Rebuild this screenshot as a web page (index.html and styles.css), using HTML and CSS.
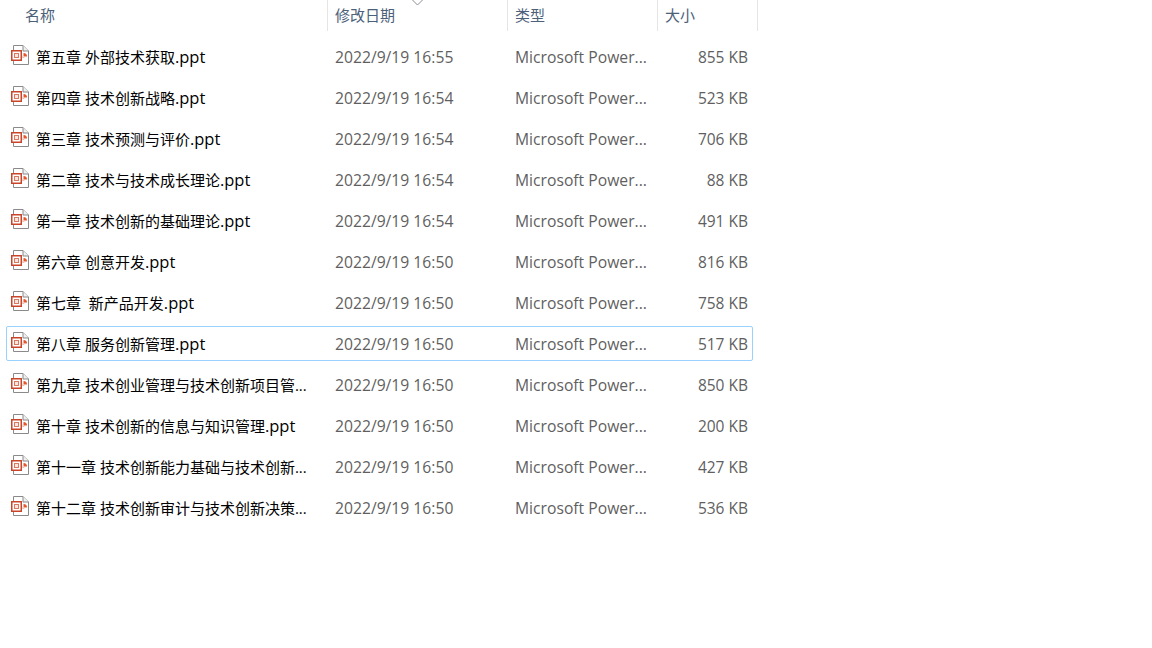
FILE: index.html
```html
<!DOCTYPE html>
<html lang="zh-CN">
<head>
<meta charset="utf-8">
<title>文件列表</title>
<link rel="stylesheet" href="styles.css">
</head>
<body>
<svg class="defs" width="0" height="0" aria-hidden="true">
  <symbol id="ppt" viewBox="0 0 18 20">
    <path d="M2.500 5V.5H12L17.500 6V19.500H2.500V15" fill="#fff" stroke="#8a8a8a"/>
    <path d="M12 .5V6H17.500" fill="#f0f0f0" stroke="#8a8a8a"/>
    <rect x=".75" y="5.750" width="9.500" height="9.500" fill="#fff" stroke="#c8452a" stroke-width="1.500"/>
    <rect x="3.500" y="8.500" width="4" height="4" fill="#fbe6df" stroke="#d9795f"/>
    <path d="M12.500 8V11.500H16A3.500 3.500 0 0 0 12.500 8Z" fill="#e4572e"/>
    <path d="M11.500 9.500V13H15A3.500 3.500 0 0 1 11.500 9.500Z" fill="#f2a38e"/>
  </symbol>
</svg>
<main class="list">
  <header class="head">
    <div class="hcell c-name">名称</div>
    <div class="hcell c-date">修改日期<svg class="sort" width="11" height="6" viewBox="0 0 11 6"><path d="M.5 0L5.500 5L10.500 0" fill="none" stroke="#8a8f96"/></svg></div>
    <div class="hcell c-type">类型</div>
    <div class="hcell c-size">大小</div>
  </header>
  <div class="rows">
    <div class="row"><div class="name"><svg class="icon"><use href="#ppt"/></svg><span class="title">第五章 外部技术获取<span class="ext">.ppt</span></span></div><div class="date">2022/9/19 16:55</div><div class="type">Microsoft Power...</div><div class="size">855 KB</div></div>
    <div class="row"><div class="name"><svg class="icon"><use href="#ppt"/></svg><span class="title">第四章 技术创新战略<span class="ext">.ppt</span></span></div><div class="date">2022/9/19 16:54</div><div class="type">Microsoft Power...</div><div class="size">523 KB</div></div>
    <div class="row"><div class="name"><svg class="icon"><use href="#ppt"/></svg><span class="title">第三章 技术预测与评价<span class="ext">.ppt</span></span></div><div class="date">2022/9/19 16:54</div><div class="type">Microsoft Power...</div><div class="size">706 KB</div></div>
    <div class="row"><div class="name"><svg class="icon"><use href="#ppt"/></svg><span class="title">第二章 技术与技术成长理论<span class="ext">.ppt</span></span></div><div class="date">2022/9/19 16:54</div><div class="type">Microsoft Power...</div><div class="size">88 KB</div></div>
    <div class="row"><div class="name"><svg class="icon"><use href="#ppt"/></svg><span class="title">第一章 技术创新的基础理论<span class="ext">.ppt</span></span></div><div class="date">2022/9/19 16:54</div><div class="type">Microsoft Power...</div><div class="size">491 KB</div></div>
    <div class="row"><div class="name"><svg class="icon"><use href="#ppt"/></svg><span class="title">第六章 创意开发<span class="ext">.ppt</span></span></div><div class="date">2022/9/19 16:50</div><div class="type">Microsoft Power...</div><div class="size">816 KB</div></div>
    <div class="row"><div class="name"><svg class="icon"><use href="#ppt"/></svg><span class="title">第七章&nbsp;&nbsp;新产品开发<span class="ext">.ppt</span></span></div><div class="date">2022/9/19 16:50</div><div class="type">Microsoft Power...</div><div class="size">758 KB</div></div>
    <div class="row selected"><div class="name"><svg class="icon"><use href="#ppt"/></svg><span class="title">第八章 服务创新管理<span class="ext">.ppt</span></span></div><div class="date">2022/9/19 16:50</div><div class="type">Microsoft Power...</div><div class="size">517 KB</div></div>
    <div class="row"><div class="name"><svg class="icon"><use href="#ppt"/></svg><span class="title">第九章 技术创业管理与技术创新项目管...</span></div><div class="date">2022/9/19 16:50</div><div class="type">Microsoft Power...</div><div class="size">850 KB</div></div>
    <div class="row"><div class="name"><svg class="icon"><use href="#ppt"/></svg><span class="title">第十章 技术创新的信息与知识管理<span class="ext">.ppt</span></span></div><div class="date">2022/9/19 16:50</div><div class="type">Microsoft Power...</div><div class="size">200 KB</div></div>
    <div class="row"><div class="name"><svg class="icon"><use href="#ppt"/></svg><span class="title">第十一章 技术创新能力基础与技术创新...</span></div><div class="date">2022/9/19 16:50</div><div class="type">Microsoft Power...</div><div class="size">427 KB</div></div>
    <div class="row"><div class="name"><svg class="icon"><use href="#ppt"/></svg><span class="title">第十二章 技术创新审计与技术创新决策...</span></div><div class="date">2022/9/19 16:50</div><div class="type">Microsoft Power...</div><div class="size">536 KB</div></div>
  </div>
</main>
</body>
</html>
```
FILE: styles.css
```css
* { box-sizing: border-box; }
html, body { margin: 0; height: 100%; background: #fff; overflow: hidden; }
body { font-family: "Open Sans", "Noto Sans CJK SC", sans-serif; font-size: 15px; color: #5f5f5f; }
.defs { position: absolute; }
.head { display: flex; width: 758px; height: 31px; }
.hcell { position: relative; display: flex; align-items: center; padding-left: 7px; border-right: 1px solid #e5e5e5; color: #4c607a; font-size: 15px; line-height: 31px; }
.c-name { width: 328px; padding-left: 25px; }
.c-date { width: 180px; }
.c-type { width: 150px; }
.c-size { width: 100px; }
.sort { position: absolute; left: 84px; top: 0; }
.rows { display: flex; flex-direction: column; gap: 6px; margin-top: 8px; padding-left: 6px; }
.row { display: grid; grid-template-columns: 322px 180px 150px 1fr; align-items: center; width: 747px; height: 35px; border: 1px solid transparent; border-radius: 2px; }
.row.selected { border-color: #99d1ff; }
.name { display: flex; align-items: center; padding-left: 4px; gap: 7px; color: #000; }
.icon { width: 18px; height: 20px; flex: none; margin-top: -3px; }
.title { white-space: nowrap; }
.ext { font-size: 16.500px; }
.date, .type { padding-left: 6px; font-size: 15.700px; }
.size { text-align: right; padding-right: 4px; font-size: 15.500px; }
```
